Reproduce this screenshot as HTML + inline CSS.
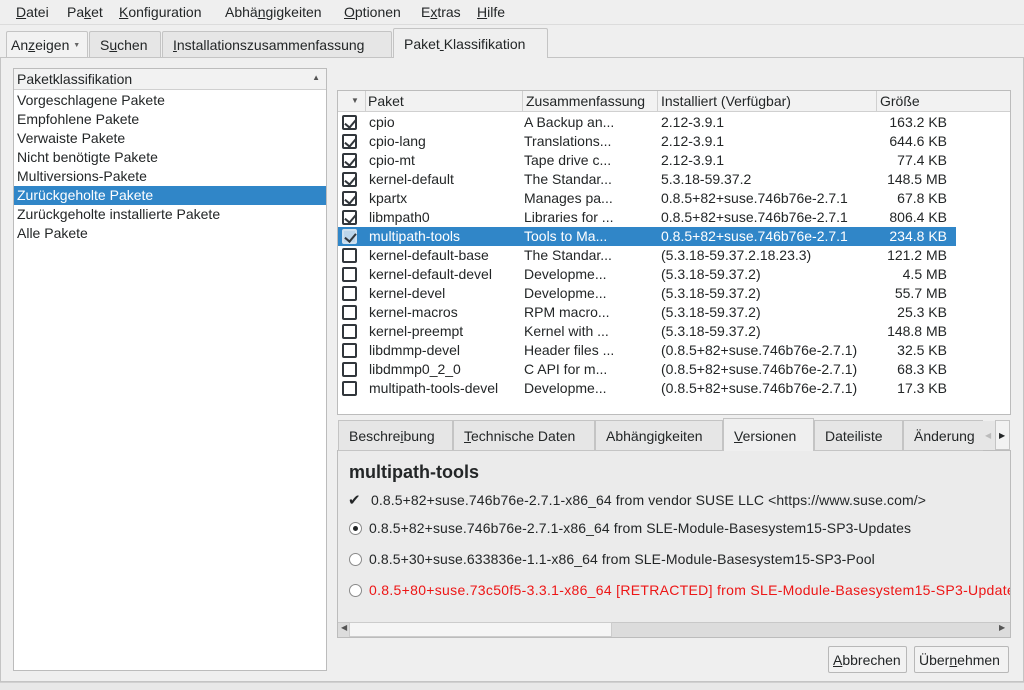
<!DOCTYPE html>
<html><head><meta charset="utf-8"><style>
*{box-sizing:border-box;margin:0;padding:0}
body{width:1024px;height:690px;background:#efefef;font-family:"Liberation Sans","DejaVu Sans",sans-serif;font-size:14px;color:#232627;position:relative;overflow:hidden}
.a{position:absolute;white-space:nowrap}
u{text-decoration:underline}
.tab{position:absolute;top:31px;height:27px;border:1px solid #c4c4c4;background:#e6e6e6;padding:5px 10px 0;border-radius:2px 2px 0 0;white-space:nowrap}
.row{position:absolute;left:338px;width:618px;height:19px;line-height:19px}
.row span{position:absolute;top:0}
.row span.s{left:auto;right:9px}
.cb{position:absolute;left:4px;top:2px;width:15px;height:15px;border:2px solid #31363b;border-radius:2px;background:#fff}
.cb.c::after{content:"";position:absolute;left:3px;top:0px;width:5px;height:9px;border:solid #31363b;border-width:0 2.5px 2.5px 0;transform:rotate(40deg)}
.btab{position:absolute;top:420px;height:31px;border:1px solid #c4c4c4;background:#e6e6e6;padding:7px 10px 0;white-space:nowrap}
.li{position:absolute;left:17px;height:19px;line-height:19px}
.btn{position:absolute;top:646px;height:27px;border:1px solid #b8b8b8;background:#f2f2f2;border-radius:2px;padding:5px 4px 0}
.rad{position:absolute;left:349px;width:13px;height:13px;border:1px solid #8a8a8a;border-radius:50%;background:#fff}
</style></head><body>
<div class="a" style="left:16px;top:4px"><u>D</u>atei</div>
<div class="a" style="left:67px;top:4px">Pa<u>k</u>et</div>
<div class="a" style="left:119px;top:4px"><u>K</u>onfiguration</div>
<div class="a" style="left:225px;top:4px">Abhä<u>n</u>gigkeiten</div>
<div class="a" style="left:344px;top:4px"><u>O</u>ptionen</div>
<div class="a" style="left:421px;top:4px">E<u>x</u>tras</div>
<div class="a" style="left:477px;top:4px"><u>H</u>ilfe</div>
<div class="a" style="left:0;top:24px;width:1024px;border-top:1px solid #dcdcdc"></div>

<div class="a" style="left:0;top:57px;width:1024px;height:625px;border:1px solid #c4c4c4;background:#efefef"></div>
<div class="tab" style="left:6px;width:82px;padding-left:4px;padding-right:0;background:#f2f2f2">An<u>z</u>eigen <span style="font-size:7px;color:#666;vertical-align:3px">▼</span></div>
<div class="tab" style="left:89px;width:72px">S<u>u</u>chen</div>
<div class="tab" style="left:162px;width:230px"><u>I</u>nstallationszusammenfassung</div>
<div class="tab" style="left:393px;top:28px;height:30px;width:155px;background:#efefef;border-bottom:none;padding-top:7px">Paket<u> </u>Klassifikation</div>

<div class="a" style="left:13px;top:68px;width:314px;height:603px;border:1px solid #bcbcbc;background:#fff"></div>
<div class="a" style="left:14px;top:69px;width:312px;height:21px;background:#f2f2f2;border-bottom:1px solid #d0d0d0;padding:2px 3px">Paketklassifikation<span style="position:absolute;right:6px;top:4px;font-size:8px;color:#555">▲</span></div>
<div class="li" style="top:91px">Vorgeschlagene Pakete</div>
<div class="li" style="top:110px">Empfohlene Pakete</div>
<div class="li" style="top:129px">Verwaiste Pakete</div>
<div class="li" style="top:148px">Nicht benötigte Pakete</div>
<div class="li" style="top:167px">Multiversions-Pakete</div>
<div class="a" style="left:14px;top:186px;width:312px;height:19px;background:#3086c8"></div>
<div class="li" style="top:186px;color:#fff">Zurückgeholte Pakete</div>
<div class="li" style="top:205px">Zurückgeholte installierte Pakete</div>
<div class="li" style="top:224px">Alle Pakete</div>

<div class="a" style="left:337px;top:90px;width:674px;height:325px;border:1px solid #bcbcbc;background:#fff"></div>
<div class="a" style="left:338px;top:91px;width:672px;height:21px;background:#f2f2f2;border-bottom:1px solid #d0d0d0"></div>
<div class="a" style="left:351px;top:96px;font-size:8px;color:#555">▼</div>
<div class="a" style="left:368px;top:93px">Paket</div>
<div class="a" style="left:522px;top:91px;height:21px;border-left:1px solid #d0d0d0;padding:2px 3px">Zusammenfassung</div>
<div class="a" style="left:657px;top:91px;height:21px;border-left:1px solid #d0d0d0;padding:2px 3px">Installiert (Verfügbar)</div>
<div class="a" style="left:876px;top:91px;height:21px;border-left:1px solid #d0d0d0;padding:2px 3px">Größe</div>
<div class="a" style="left:365px;top:91px;height:21px;border-left:1px solid #d0d0d0"></div>

<div class="row" style="top:113px"><i class="cb c"></i><span style="left:31px">cpio</span><span style="left:186px">A Backup an...</span><span style="left:323px">2.12-3.9.1</span><span class="s">163.2 KB</span></div>
<div class="row" style="top:132px"><i class="cb c"></i><span style="left:31px">cpio-lang</span><span style="left:186px">Translations...</span><span style="left:323px">2.12-3.9.1</span><span class="s">644.6 KB</span></div>
<div class="row" style="top:151px"><i class="cb c"></i><span style="left:31px">cpio-mt</span><span style="left:186px">Tape drive c...</span><span style="left:323px">2.12-3.9.1</span><span class="s">77.4 KB</span></div>
<div class="row" style="top:170px"><i class="cb c"></i><span style="left:31px">kernel-default</span><span style="left:186px">The Standar...</span><span style="left:323px">5.3.18-59.37.2</span><span class="s">148.5 MB</span></div>
<div class="row" style="top:189px"><i class="cb c"></i><span style="left:31px">kpartx</span><span style="left:186px">Manages pa...</span><span style="left:323px">0.8.5+82+suse.746b76e-2.7.1</span><span class="s">67.8 KB</span></div>
<div class="row" style="top:208px"><i class="cb c"></i><span style="left:31px">libmpath0</span><span style="left:186px">Libraries for ...</span><span style="left:323px">0.8.5+82+suse.746b76e-2.7.1</span><span class="s">806.4 KB</span></div>
<div class="row" style="top:227px;background:#3086c8;color:#fff"><i class="cb c" style="border-color:#cfe0ee;background:#bcd5ea"></i><span style="left:31px">multipath-tools</span><span style="left:186px">Tools to Ma...</span><span style="left:323px">0.8.5+82+suse.746b76e-2.7.1</span><span class="s">234.8 KB</span></div>
<div class="row" style="top:246px"><i class="cb"></i><span style="left:31px">kernel-default-base</span><span style="left:186px">The Standar...</span><span style="left:323px">(5.3.18-59.37.2.18.23.3)</span><span class="s">121.2 MB</span></div>
<div class="row" style="top:265px"><i class="cb"></i><span style="left:31px">kernel-default-devel</span><span style="left:186px">Developme...</span><span style="left:323px">(5.3.18-59.37.2)</span><span class="s">4.5 MB</span></div>
<div class="row" style="top:284px"><i class="cb"></i><span style="left:31px">kernel-devel</span><span style="left:186px">Developme...</span><span style="left:323px">(5.3.18-59.37.2)</span><span class="s">55.7 MB</span></div>
<div class="row" style="top:303px"><i class="cb"></i><span style="left:31px">kernel-macros</span><span style="left:186px">RPM macro...</span><span style="left:323px">(5.3.18-59.37.2)</span><span class="s">25.3 KB</span></div>
<div class="row" style="top:322px"><i class="cb"></i><span style="left:31px">kernel-preempt</span><span style="left:186px">Kernel with ...</span><span style="left:323px">(5.3.18-59.37.2)</span><span class="s">148.8 MB</span></div>
<div class="row" style="top:341px"><i class="cb"></i><span style="left:31px">libdmmp-devel</span><span style="left:186px">Header files ...</span><span style="left:323px">(0.8.5+82+suse.746b76e-2.7.1)</span><span class="s">32.5 KB</span></div>
<div class="row" style="top:360px"><i class="cb"></i><span style="left:31px">libdmmp0_2_0</span><span style="left:186px">C API for m...</span><span style="left:323px">(0.8.5+82+suse.746b76e-2.7.1)</span><span class="s">68.3 KB</span></div>
<div class="row" style="top:379px"><i class="cb"></i><span style="left:31px">multipath-tools-devel</span><span style="left:186px">Developme...</span><span style="left:323px">(0.8.5+82+suse.746b76e-2.7.1)</span><span class="s">17.3 KB</span></div>

<div class="a" style="left:337px;top:450px;width:674px;height:188px;border:1px solid #bcbcbc;background:#ebebeb"></div>
<div class="btab" style="left:338px;width:115px">Beschre<u>i</u>bung</div>
<div class="btab" style="left:453px;width:142px"><u>T</u>echnische Daten</div>
<div class="btab" style="left:595px;width:128px">Abhängigkeiten</div>
<div class="btab" style="left:723px;top:418px;height:33px;width:91px;background:#efefef;border-bottom:none;padding-top:9px"><u>V</u>ersionen</div>
<div class="btab" style="left:814px;width:89px">Dateiliste</div>
<div class="btab" style="left:903px;width:80px;border-right:none;overflow:hidden">Änderung</div>
<div class="a" style="left:983px;top:421px;width:12px;height:29px;background:#e6e6e6;color:#bbb;font-size:8px;padding:10px 2px">◀</div>
<div class="a" style="left:995px;top:420px;width:15px;height:30px;border:1px solid #c4c4c4;background:#f2f2f2;font-size:8px;padding:10px 3px">▶</div>
<div class="a" style="left:349px;top:462px;font-size:18px;font-weight:bold;color:#232627">multipath-tools</div>
<div class="a" style="left:348px;top:491px;font-size:15px">✔</div>
<div class="a" style="left:371px;top:492px;letter-spacing:0.1px">0.8.5+82+suse.746b76e-2.7.1-x86_64 from vendor SUSE LLC &lt;https://www.suse.com/&gt;</div>
<div class="rad" style="top:522px"><i style="position:absolute;left:3px;top:3px;width:5px;height:5px;border-radius:50%;background:#232627"></i></div>
<div class="a" style="left:369px;top:520px;letter-spacing:0.1px">0.8.5+82+suse.746b76e-2.7.1-x86_64 from SLE-Module-Basesystem15-SP3-Updates</div>
<div class="rad" style="top:553px"></div>
<div class="a" style="left:369px;top:551px;letter-spacing:0.1px">0.8.5+30+suse.633836e-1.1-x86_64 from SLE-Module-Basesystem15-SP3-Pool</div>
<div class="rad" style="top:584px"></div>
<div class="a" style="left:369px;top:582px;color:#ed1515;width:641px;overflow:hidden;letter-spacing:0.3px">0.8.5+80+suse.73c50f5-3.3.1-x86_64 [RETRACTED] from SLE-Module-Basesystem15-SP3-Updates</div>
<div class="a" style="left:338px;top:622px;width:672px;height:15px;background:#dcdcdc;border-top:1px solid #c8c8c8"></div>
<div class="a" style="left:349px;top:622px;width:263px;height:15px;background:#f5f5f5;border:1px solid #ccc"></div>
<div class="a" style="left:341px;top:623px;font-size:8px;color:#555">◀</div>
<div class="a" style="left:999px;top:623px;font-size:8px;color:#555">▶</div>

<div class="btn" style="left:828px;width:79px"><u>A</u>bbrechen</div>
<div class="btn" style="left:914px;width:95px">Über<u>n</u>ehmen</div>
<div class="a" style="left:0;top:682px;width:1024px;height:8px;background:#e8e8e8;border-top:1px solid #d0d0d0"></div>
</body></html>
